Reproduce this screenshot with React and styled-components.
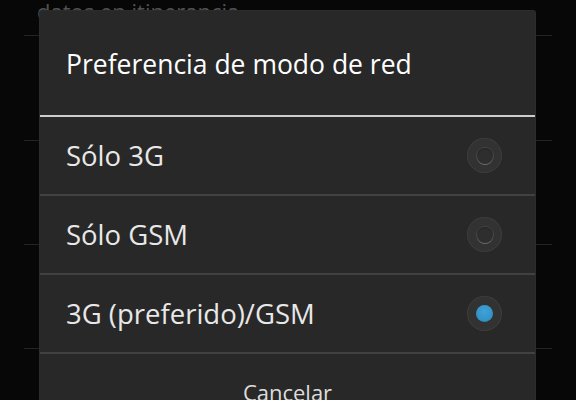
import React, { useState } from "react";
import styled, { createGlobalStyle } from "styled-components";

const GlobalStyle = createGlobalStyle`
  html, body {
    margin: 0;
    padding: 0;
    background: #070707;
  }
  body {
    font-family: "Open Sans", "Noto Sans", "DejaVu Sans", sans-serif;
  }
`;

const Screen = styled.div`
  position: relative;
  width: 576px;
  height: 400px;
  overflow: hidden;
  background: #070707;
`;

const SettingsList = styled.div`
  display: flex;
  flex-direction: column;
  padding: 0 24px;
`;

const SettingItem = styled.div`
  height: ${(p) => p.h}px;
  display: flex;
  align-items: flex-start;
  padding-left: 13px;
  color: #525252;
  font-size: 22px;
  line-height: 1;
  border-bottom: 1px solid #242424;
  box-sizing: border-box;
  overflow: hidden;
`;

const Dialog = styled.div`
  position: absolute;
  left: 40px;
  top: 11px;
  width: 495px;
  background: #282828;
  border-radius: 2px;
  box-shadow: 0 0 0 1px #2c2c2c;
`;

const Title = styled.div`
  height: 106px;
  display: flex;
  align-items: center;
  padding-left: 26px;
  padding-top: 2px;
  box-sizing: border-box;
  color: #ffffff;
  font-size: 26.5px;
  border-bottom: 2px solid #cdcdcd;
`;

const Option = styled.div`
  height: 79px;
  display: flex;
  align-items: center;
  justify-content: space-between;
  padding: 0 33px 0 26px;
  box-sizing: border-box;
  border-bottom: 2px solid #414141;
  color: #e8e8e8;
  font-size: 27.5px;
  cursor: pointer;
`;

const Radio = styled.span`
  width: 35px;
  height: 35px;
  border-radius: 50%;
  background: #323232;
  box-shadow: inset 0 0 0 1px #3c3c3c;
  display: flex;
  align-items: center;
  justify-content: center;
`;

const RadioRing = styled.span`
  width: 16px;
  height: 16px;
  border-radius: 50%;
  background: #2e2e2e;
  box-shadow: inset 0 1px 1px #242424, 0 1px 0 #6a6a6a, 0 0 0 1px #474747;
`;

const RadioDot = styled.span`
  width: 17px;
  height: 17px;
  border-radius: 50%;
  background: radial-gradient(circle at 50% 40%, #3fa2d8 0%, #3594c8 60%, #2a80b0 100%);
`;

const CancelButton = styled.div`
  height: 60px;
  display: flex;
  justify-content: center;
  padding-top: 23px;
  box-sizing: border-box;
  color: #dcdcdc;
  font-size: 22px;
`;

const options = ["Sólo 3G", "Sólo GSM", "3G (preferido)/GSM"];

export default function App() {
  const [selected, setSelected] = useState(2);

  return (
    <>
      <GlobalStyle />
      <Screen>
        <SettingsList>
          <SettingItem h={36}>datos en itinerancia</SettingItem>
          <SettingItem h={105} />
          <SettingItem h={104} />
          <SettingItem h={104} />
        </SettingsList>
        <Dialog>
          <Title>Preferencia de modo de red</Title>
          {options.map((label, i) => (
            <Option key={label} onClick={() => setSelected(i)}>
              {label}
              <Radio>{selected === i ? <RadioDot /> : <RadioRing />}</Radio>
            </Option>
          ))}
          <CancelButton>Cancelar</CancelButton>
        </Dialog>
      </Screen>
    </>
  );
}
